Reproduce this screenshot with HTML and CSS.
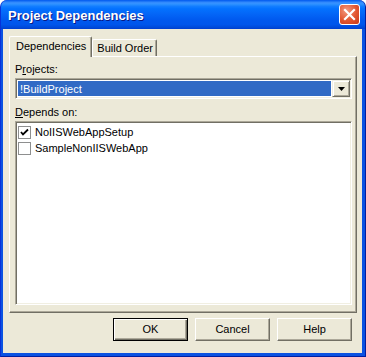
FILE: index.html
```html
<!DOCTYPE html>
<html>
<head>
  <title>Project Dependencies</title>
  <link rel="stylesheet" href="styles.css">
</head>
<body>
  <div class="window">
    <div class="titlebar">
      <span class="title">Project Dependencies</span>
      <span class="close">
        <svg width="13" height="13" viewBox="0 0 13 13">
          <path d="M2 2 L11 11 M11 2 L2 11" stroke="#fff" stroke-width="2.2" stroke-linecap="square"/>
        </svg>
      </span>
    </div>
    <div class="client">
      <div class="tabs">
        <span class="tab active">Dependencies</span>
        <span class="tab">Build Order</span>
      </div>
      <div class="panel">
        <div class="label">P<u>r</u>ojects:</div>
        <div class="combo">
          <span class="combo-value">!BuildProject</span>
          <span class="combo-btn">
            <svg width="7" height="4" viewBox="0 0 7 4"><path d="M0 0 H7 L3.5 4 Z" fill="#000"/></svg>
          </span>
        </div>
        <div class="label gap"><u>D</u>epends on:</div>
        <div class="listbox">
          <div class="item">
            <span class="check">
              <svg width="11" height="11" viewBox="0 0 11 11"><path d="M2 5 L4 7.5 L9 2.5" stroke="#000" stroke-width="1.8" fill="none"/></svg>
            </span>
            NoIISWebAppSetup
          </div>
          <div class="item">
            <span class="check"></span>
            SampleNonIISWebApp
          </div>
        </div>
      </div>
      <div class="buttons">
        <span class="btn default">OK</span>
        <span class="btn">Cancel</span>
        <span class="btn">Help</span>
      </div>
    </div>
  </div>
</body>
</html>
```

FILE: styles.css
```css
body {
  margin: 0;
  font-family: "Liberation Sans", Arial, sans-serif;
  font-size: 11px;
  color: #000;
}

.window {
  width: 366px;
  height: 357px;
  box-sizing: border-box;
  display: flex;
  flex-direction: column;
  background: #0A52E2;
  border-radius: 7px 7px 0 0;
  border-left: 1px solid #0831D9;
  border-right: 1px solid #001EA0;
  border-bottom: 1px solid #001EA0;
  padding: 0 3px 3px 2px;
}

.titlebar {
  height: 29px;
  margin: 0 -3px 0 -2px;
  padding: 0 5px 0 7px;
  display: flex;
  align-items: center;
  justify-content: space-between;
  border-radius: 7px 7px 0 0;
  background: linear-gradient(to bottom, #0058EE 0%, #3A93FF 10%, #288EFF 16%, #127DFF 22%, #0372FF 30%, #0468F8 45%, #0058EE 70%, #0055EB 85%, #0049D8 95%, #003DD0 100%);
}

.title {
  color: #fff;
  font-weight: bold;
  font-size: 13px;
  text-shadow: 1px 1px #0A1883;
  padding-top: 1px;
}

.close {
  width: 21px;
  height: 21px;
  box-sizing: border-box;
  border: 1px solid #fff;
  border-radius: 3px;
  background: radial-gradient(circle at 35% 30%, #F29A80 0%, #E2552F 55%, #C6381A 100%);
  display: flex;
  align-items: center;
  justify-content: center;
}

.client {
  flex: 1;
  background: #ECE9D8;
  padding: 7px 5px 12px 6px;
  display: flex;
  flex-direction: column;
}

.tabs {
  display: flex;
  align-items: flex-end;
  height: 20px;
}

.tab {
  height: 16px;
  line-height: 16px;
  padding: 0 3px 0 4px;
  border-top: 1px solid #fff;
  border-left: 1px solid #fff;
  border-right: 1px solid #716F64;
  box-shadow: inset -1px 0 #ACA899;
  border-radius: 2px 2px 0 0;
  background: #ECE9D8;
}

.tab.active {
  height: 20px;
  line-height: 19px;
  padding: 0 5px 0 6px;
  position: relative;
  z-index: 1;
  margin-bottom: -1px;
}

.panel {
  flex: 1;
  border-top: 1px solid #fff;
  border-left: 1px solid #fff;
  border-right: 1px solid #716F64;
  border-bottom: 1px solid #716F64;
  box-shadow: inset -1px -1px #ACA899;
  padding: 6px 4px 7px 5px;
  display: flex;
  flex-direction: column;
}

.label {
  height: 13px;
  line-height: 13px;
  margin-bottom: 2px;
}

.label.gap {
  margin-top: 7px;
}

.combo {
  height: 21px;
  box-sizing: border-box;
  border-top: 1px solid #ACA899;
  border-left: 1px solid #ACA899;
  border-right: 1px solid #fff;
  border-bottom: 1px solid #fff;
  box-shadow: inset 1px 1px #716F64, inset -1px -1px #F1EFE2;
  padding: 2px;
  display: flex;
  background: #fff;
}

.combo-value {
  flex: 1;
  background: #316AC5;
  color: #fff;
  line-height: 16px;
  padding-left: 2px;
  margin-right: 1px;
}

.combo-btn {
  width: 18px;
  box-sizing: border-box;
  background: #ECE9D8;
  border-top: 1px solid #F1EFE2;
  border-left: 1px solid #F1EFE2;
  border-right: 1px solid #716F64;
  border-bottom: 1px solid #716F64;
  box-shadow: inset 1px 1px #fff, inset -1px -1px #ACA899;
  display: flex;
  align-items: center;
  justify-content: center;
  margin: -1px -1px -1px 0;
}

.listbox {
  flex: 1;
  border-top: 1px solid #ACA899;
  border-left: 1px solid #ACA899;
  border-right: 1px solid #fff;
  border-bottom: 1px solid #fff;
  box-shadow: inset 1px 1px #716F64, inset -1px -1px #F1EFE2;
  background: #fff;
  padding: 2px;
}

.item {
  height: 16px;
  display: flex;
  align-items: center;
  gap: 4px;
}

.check {
  width: 13px;
  height: 13px;
  box-sizing: border-box;
  border: 1px solid #8E8F8F;
  background: #fff;
  display: flex;
  align-items: center;
  justify-content: center;
}

.buttons {
  display: flex;
  justify-content: flex-end;
  gap: 7px;
  padding: 5px 5px 0 0;
}

.btn {
  width: 75px;
  height: 23px;
  box-sizing: border-box;
  text-align: center;
  line-height: 20px;
  border-top: 1px solid #fff;
  border-left: 1px solid #fff;
  border-right: 1px solid #716F64;
  border-bottom: 1px solid #716F64;
  box-shadow: inset -1px -1px #ACA899;
}

.btn.default {
  border: 1px solid #000;
  box-shadow: inset 1px 1px #fff, inset -1px -1px #716F64, inset -2px -2px #ACA899;
}
```
